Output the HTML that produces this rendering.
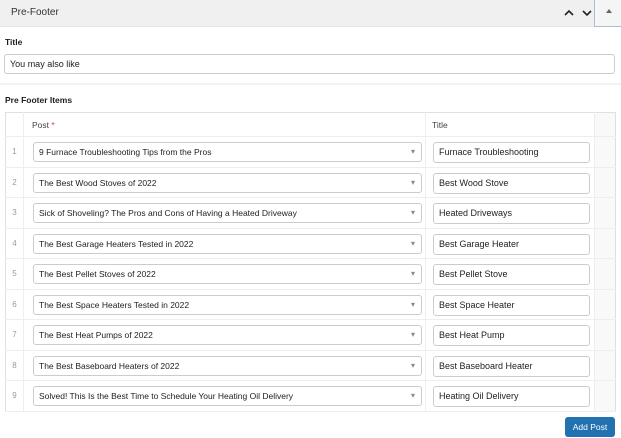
<html><head><style>
body{margin:0;width:621px;height:438px;background:#fff;font-family:"Liberation Sans",sans-serif;font-size:9px;color:#1e1e1e;position:relative;overflow:hidden}
.hd{position:absolute;left:0;top:0;width:621px;height:26px;background:#f0f0f0;border-bottom:1px solid #e6e6e6}
.hd .t{position:absolute;left:11px;top:7px;font-size:10px;color:#333}
.tog{position:absolute;left:594px;top:0;width:27px;height:26px;border-left:1px solid #a8bfd8;border-bottom:1px solid #a8bfd8;background:#f5f5f5}
.lbl{position:absolute;font-weight:bold;font-size:8.5px}
.inp{position:absolute;border:1px solid #ccc;border-radius:3px;background:#fff;box-sizing:border-box;padding-left:5px;font-size:9px;line-height:18px}
table{position:absolute;left:5px;top:112px;width:610px;border-collapse:collapse;border:1px solid #e0e0e0;table-layout:fixed}
td{border-bottom:1px solid #eee;padding:0;height:30.5px;position:relative;box-sizing:border-box}
td.n{text-align:center;color:#999;border-right:1px solid #eee;font-size:8px}
td.p{border-right:1px solid #eee}
td.ti{border-right:1px solid #eee}
td.x{background:#f9f9f9}
tr.h td{height:24px;color:#444;font-size:8.5px}
.sel{position:absolute;left:9px;top:5px;width:389px;height:20px;border:1px solid #ccc;border-radius:3px;box-sizing:border-box;padding-left:5px;line-height:18px;font-size:8.5px}
.sel:after{content:"▾";position:absolute;right:6px;top:0;color:#888;font-size:8px}
.ti .inp{left:7px;top:5px;width:157px;height:21px;line-height:19px}
</style></head><body>
<div class="hd"><span class="t">Pre-Footer</span>
<svg style="position:absolute;left:563px;top:8px" width="30" height="10"><path d="M2 7 L6 3 L10 7 M20 3 L24 7 L28 3" stroke="#222" stroke-width="1.6" fill="none"/></svg>
</div>
<div class="tog"><svg style="position:absolute;left:11px;top:9px" width="6" height="5"><path d="M0 4 L3 0 L6 4Z" fill="#666"/></svg></div>
<div class="lbl" style="left:5px;top:37px">Title</div>
<div class="inp" style="left:4px;top:54px;width:611px;height:20px">You may also like</div>
<div style="position:absolute;left:0;top:83px;width:621px;height:2px;background:#f3f3f3"></div>
<div class="lbl" style="left:5px;top:95px">Pre Footer Items</div>
<table>
<colgroup><col style="width:18px"><col style="width:402px"><col style="width:169px"><col style="width:21px"></colgroup>
<tr class="h"><td class="n"></td><td class="p" style="padding-left:8px">Post <span style="color:#d63638">*</span></td><td class="ti" style="padding-left:6px">Title</td><td class="x"></td></tr>
<tr><td class="n">1</td><td class="p"><div class="sel">9 Furnace Troubleshooting Tips from the Pros</div></td><td class="ti"><div class="inp">Furnace Troubleshooting</div></td><td class="x"></td></tr>
<tr><td class="n">2</td><td class="p"><div class="sel">The Best Wood Stoves of 2022</div></td><td class="ti"><div class="inp">Best Wood Stove</div></td><td class="x"></td></tr>
<tr><td class="n">3</td><td class="p"><div class="sel">Sick of Shoveling? The Pros and Cons of Having a Heated Driveway</div></td><td class="ti"><div class="inp">Heated Driveways</div></td><td class="x"></td></tr>
<tr><td class="n">4</td><td class="p"><div class="sel">The Best Garage Heaters Tested in 2022</div></td><td class="ti"><div class="inp">Best Garage Heater</div></td><td class="x"></td></tr>
<tr><td class="n">5</td><td class="p"><div class="sel">The Best Pellet Stoves of 2022</div></td><td class="ti"><div class="inp">Best Pellet Stove</div></td><td class="x"></td></tr>
<tr><td class="n">6</td><td class="p"><div class="sel">The Best Space Heaters Tested in 2022</div></td><td class="ti"><div class="inp">Best Space Heater</div></td><td class="x"></td></tr>
<tr><td class="n">7</td><td class="p"><div class="sel">The Best Heat Pumps of 2022</div></td><td class="ti"><div class="inp">Best Heat Pump</div></td><td class="x"></td></tr>
<tr><td class="n">8</td><td class="p"><div class="sel">The Best Baseboard Heaters of 2022</div></td><td class="ti"><div class="inp">Best Baseboard Heater</div></td><td class="x"></td></tr>
<tr><td class="n">9</td><td class="p"><div class="sel">Solved! This Is the Best Time to Schedule Your Heating Oil Delivery</div></td><td class="ti"><div class="inp">Heating Oil Delivery</div></td><td class="x"></td></tr>
</table>
<div style="position:absolute;left:565px;top:417px;width:50px;height:20px;background:#2271b1;border-radius:3px;color:#fff;font-size:8.5px;line-height:20px;text-align:center">Add Post</div>
</body></html>
